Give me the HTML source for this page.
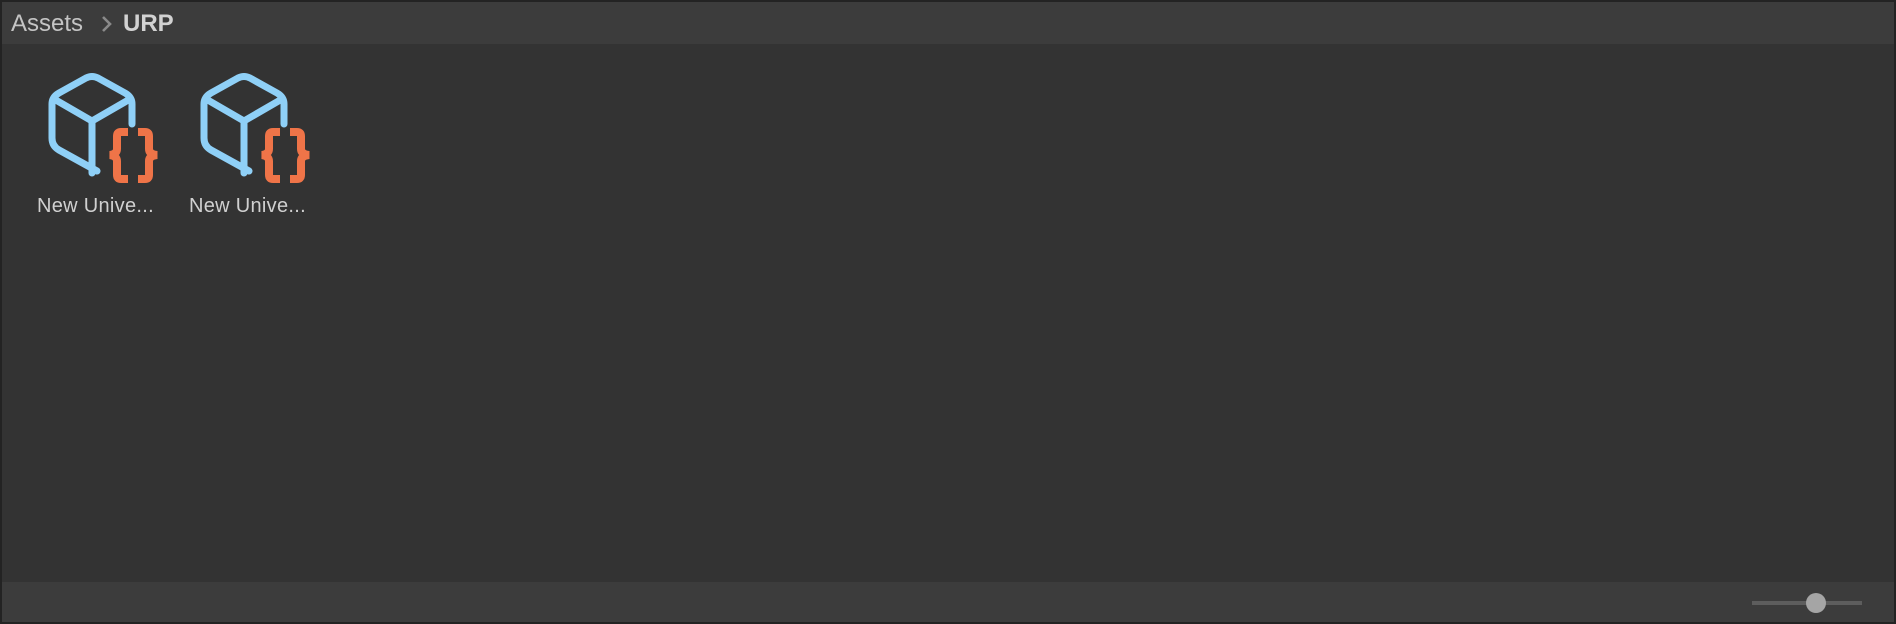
<!DOCTYPE html>
<html><head><meta charset="utf-8"><style>
html,body{margin:0;padding:0}
body{width:1896px;height:624px;background:#232323;position:relative;overflow:hidden;font-family:"Liberation Sans",sans-serif}
.main{position:absolute;left:2px;top:2px;right:2px;bottom:2px;background:#333333}
.hdr{position:absolute;left:2px;top:2px;right:2px;height:42px;background:#3c3c3c}
.crumb{position:absolute;left:9px;top:8px;font-size:24px;color:#c4c4c4}
.crumb b{color:#d2d2d2;position:absolute;left:112px;top:0}
.lbl{position:absolute;top:195px;font-size:20px;color:#d0d0d0;letter-spacing:.3px}
.ftr{position:absolute;left:2px;bottom:2px;right:2px;height:40px;background:#3c3c3c}
</style></head><body>
<div class="main"></div>
<div class="hdr"><div class="crumb">Assets<b>URP</b></div>
<svg width="20" height="20" style="position:absolute;left:95px;top:12px"><path d="M6 3 L13 10 L6 17" fill="none" stroke="#8a8a8a" stroke-width="2.6"/></svg></div>
<svg width="1896" height="624" style="position:absolute;left:0;top:0">
<defs><g id="ic">
<path d="M97 171 L59 150 Q52 146 52 138 L52 104 Q52 97 59 93 L86 78 Q92 75 98 78 L125 93 Q132 97 132 104 L132 124" fill="none" stroke="#8fd0f7" stroke-width="7" stroke-linejoin="round" stroke-linecap="round"/>
<path d="M54 99 L92 121 L130 99 M92 121 L92 173" fill="none" stroke="#8fd0f7" stroke-width="7" stroke-linejoin="round" stroke-linecap="round"/>
<path d="M128 132 L121 132 Q117 132 117 136 L117 149 Q117 154 110 155 Q117 156 117 161 L117 175 Q117 179 121 179 L128 179" fill="none" stroke="#ef7448" stroke-width="8"/>
<path d="M138 132 L145 132 Q149 132 149 136 L149 149 Q149 154 157 155 Q149 156 149 161 L149 175 Q149 179 145 179 L138 179" fill="none" stroke="#ef7448" stroke-width="8"/>
</g></defs>
<use href="#ic"/>
<use href="#ic" transform="translate(152,0)"/>
</svg>
<div class="lbl" style="left:37px">New Unive...</div>
<div class="lbl" style="left:189px">New Unive...</div>
<div class="ftr"></div>
<div style="position:absolute;left:1752px;top:601px;width:110px;height:4px;background:#5d5d5d"></div>
<div style="position:absolute;left:1806px;top:593px;width:20px;height:20px;border-radius:50%;background:#a5a5a5"></div>
</body></html>
